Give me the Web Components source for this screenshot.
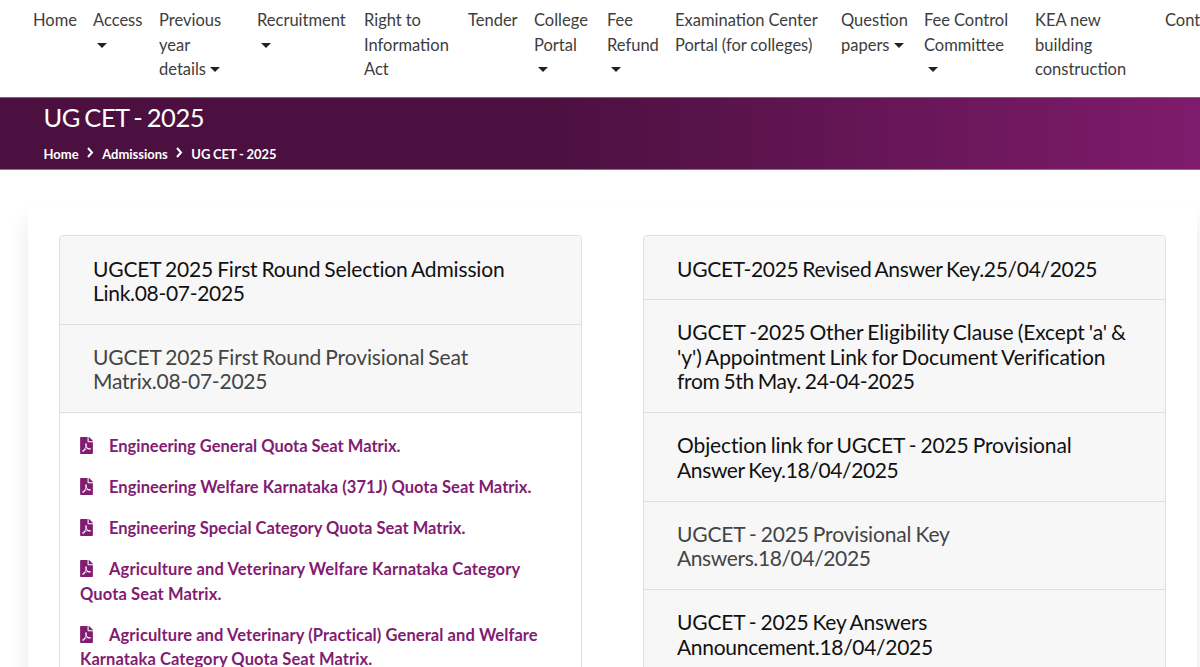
<!DOCTYPE html>
<html><head><meta charset="utf-8"><style>
html,body{margin:0;padding:0;height:667px;overflow:hidden;background:#fff;font-family:Lato,"Liberation Sans",sans-serif}
</style></head><body>
<site-nav></site-nav>
<page-banner></page-banner>
<main-card>
  <acc-col>
    <acc-head><h-l style="letter-spacing:-.15px">UGCET 2025 First Round Selection Admission</h-l><h-l style="letter-spacing:-.3px">Link.08-07-2025</h-l></acc-head>
    <acc-head open><h-l style="letter-spacing:-.11px">UGCET 2025 First Round Provisional Seat</h-l><h-l style="letter-spacing:-.23px">Matrix.08-07-2025</h-l></acc-head>
    <pdf-list>
      <pdf-item>Engineering General Quota Seat Matrix.</pdf-item>
      <pdf-item style="letter-spacing:.04px">Engineering Welfare Karnataka (371J) Quota Seat Matrix.</pdf-item>
      <pdf-item>Engineering Special Category Quota Seat Matrix.</pdf-item>
      <pdf-item style="letter-spacing:.12px">Agriculture and Veterinary Welfare Karnataka Category Quota Seat Matrix.</pdf-item>
      <pdf-item style="letter-spacing:.09px">Agriculture and Veterinary (Practical) General and Welfare Karnataka Category Quota Seat Matrix.</pdf-item>
    </pdf-list>
  </acc-col>
  <acc-col>
    <acc-head><h-l style="letter-spacing:-.31px">UGCET-2025 Revised Answer Key.25/04/2025</h-l></acc-head>
    <acc-head><h-l style="letter-spacing:-.1px">UGCET -2025 Other Eligibility Clause (Except 'a' &amp;</h-l><h-l style="letter-spacing:-.08px">'y') Appointment Link for Document Verification</h-l><h-l style="letter-spacing:-.31px">from 5th May. 24-04-2025</h-l></acc-head>
    <acc-head><h-l style="letter-spacing:-.12px">Objection link for UGCET - 2025 Provisional</h-l><h-l style="letter-spacing:-.37px">Answer Key.18/04/2025</h-l></acc-head>
    <acc-head open><h-l style="letter-spacing:-.15px">UGCET - 2025 Provisional Key</h-l><h-l style="letter-spacing:-.39px">Answers.18/04/2025</h-l></acc-head>
    <acc-head><h-l style="letter-spacing:-.18px">UGCET - 2025 Key Answers</h-l><h-l style="letter-spacing:-.3px">Announcement.18/04/2025</h-l></acc-head>
  </acc-col>
</main-card>
<script>
function def(name,css,html){
  customElements.define(name,class extends HTMLElement{
    constructor(){super();const r=this.attachShadow({mode:'open'});r.innerHTML='<style>'+css+'</style>'+html(this);}
  });
}
const C='<span class="c"></span>';
const NAV=[
 ['Home',60],['Access<br>'+C,66],['Previous<br>year<br>details'+C,98],['Recruitment<br>'+C,107],['Right to<br>Information<br>Act',104],
 ['Tender',66],['College<br>Portal<br>'+C,73],['Fee<br>Refund<br>'+C,68],['Examination Center<br>Portal (for colleges)',166],
 ['Question<br>papers'+C,83],['Fee Control<br>Committee<br>'+C,111],['KEA new<br>building<br>construction',130],['Contact',80]];
def('site-nav',`:host{display:flex;height:97px;box-sizing:border-box;padding:8px 0 0 33px;overflow:hidden;background:#fff;color:#3d3d3d;font-size:16.5px;line-height:24.6px;word-spacing:-.3px}
 .i{flex:none;box-sizing:border-box;white-space:nowrap}
 .c{display:inline-block;width:0;height:0;margin-left:4px;vertical-align:3px;border:5px solid transparent;border-top-color:#222;border-bottom:0}`,
 ()=>NAV.map(([t,w])=>`<div class="i" style="width:${w}px">${t}</div>`).join(''));
def('page-banner',`:host{display:block;height:73px;box-sizing:border-box;padding:4px 0 0 43.5px;color:#fff;background:linear-gradient(90deg,#4b103f 0%,#4b103f 45%,#7f1b6c 100%);border-top:1px solid #8d5a85;border-bottom:1px solid #9a6a93}
 h1{margin:0;font-weight:400;font-size:25.5px;line-height:31px;letter-spacing:-.49px;word-spacing:-1.6px}
 nav{display:flex;align-items:center;margin-top:12px;font-size:13px;font-weight:700;line-height:18px;word-spacing:-.6px}
 svg{width:9px;height:11px;margin:0 7.5px 3px 7px}`,
 ()=>{const s='<svg viewBox="0 0 9 11"><path d="M2 1l4 4.5L2 10" fill="none" stroke="#fff" stroke-width="2"/></svg>';
 return `<h1>UG CET - 2025</h1><nav><span>Home</span>${s}<span>Admissions</span>${s}<span>UG CET - 2025</span></nav>`});
def('main-card',`:host{display:grid;grid-template-columns:523px 523px;column-gap:61px;margin:35px 3px 0 28px;padding:30px 0 0 31px;height:500px;box-sizing:border-box;background:#fff;box-shadow:0 12px 20px rgba(0,0,0,.09)}`,()=>'<slot></slot>');
def('acc-col',`:host{display:block;box-sizing:border-box;border:1px solid #dfdfdf;border-radius:4px;height:520px;overflow:hidden;background:#fff}`,()=>'<slot></slot>');
def('h-l',`:host{display:block;white-space:nowrap}`,()=>'<slot></slot>');
def('acc-head',`:host{display:block;padding:20px 33px 18.5px;background:#f7f7f7;border-bottom:1px solid #dfdfdf;color:#111;font-size:21px;line-height:24.5px;word-spacing:-1.2px}
 :host(:first-child){padding-top:20.5px;padding-bottom:18px}
 :host([open]){color:#444}`,()=>'<slot></slot>');
def('pdf-list',`:host{display:block;padding:21px 25px 0 20px;background:#fff}`,()=>'<slot></slot>');
def('pdf-item',`:host{display:block;margin-bottom:16.4px;color:#821b72;font-size:16.5px;font-weight:700;line-height:24.6px}
 svg{display:inline-block;width:13px;height:17px;margin-right:16px;vertical-align:-2px}`,
 ()=>`<svg viewBox="0 0 384 512"><path fill="#821b72" d="M181.900 256.100c-5-16-4.900-46.900-2-46.900 8.400 0 7.600 36.900 2 46.900zm-1.700 47.200c-7.700 20.200-17.300 43.300-28.400 62.700 18.300-7 39-17.200 62.900-21.900-12.700-9.600-24.900-23.400-34.500-40.800zM86.100 428.100c0 .8 13.200-5.400 34.900-40.200-6.700 6.300-29.100 24.500-34.900 40.200zM248 160h136v328c0 13.300-10.700 24-24 24H24c-13.300 0-24-10.700-24-24V24C0 10.700 10.700 0 24 0h200v136c0 13.200 10.800 24 24 24zm-8 171.800c-20-12.200-33.300-29-42.700-53.800 4.500-18.500 11.600-46.600 6.200-64.200-4.700-29.400-42.400-26.500-47.800-6.800-5 18.300-.4 44.100 8.100 77-11.600 27.600-28.700 64.600-40.800 85.800-.1 0-.1.100-.2.100-27.100 13.900-73.600 44.500-54.500 68 5.600 6.900 16 10 21.500 10 17.900 0 35.700-18 61.100-61.800 25.800-8.500 54.100-19.100 79-23.200 21.700 11.800 47.100 19.500 64 19.500 29.200 0 31.200-32 19.700-43.400-13.900-13.600-54.300-9.700-73.600-7.200zM377 105L279 7c-4.500-4.500-10.600-7-17-7h-6v128h128v-6.100c0-6.300-2.500-12.400-7-16.900zm-74.100 255.300c4.100-2.700-2.500-11.900-42.800-9 37.100 15.800 42.800 9 42.800 9z"/></svg><slot></slot>`);
</script>
</body></html>
